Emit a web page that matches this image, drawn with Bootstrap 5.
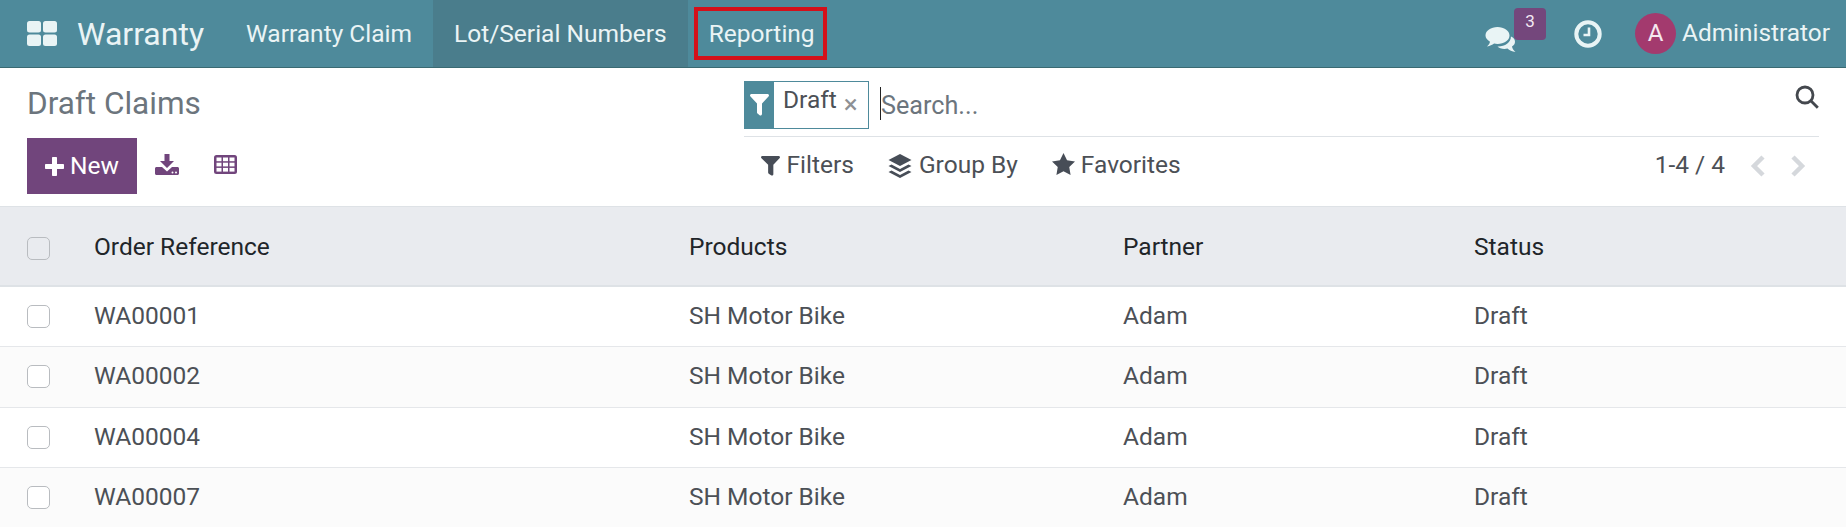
<!DOCTYPE html>
<html lang="en"><head><meta charset="utf-8"><title>Draft Claims</title>
<link href="https://cdn.jsdelivr.net/npm/bootstrap@5.3.0/dist/css/bootstrap.min.css" rel="stylesheet">
<style>
html,body{height:529px;overflow:hidden}
body{font-family:Roboto,"Liberation Sans",sans-serif;background:#fff;color:#4c5056;font-size:24.5px}
.topbar{height:68px;background:#4e8a9b;border-bottom:1px solid #3a6a72;color:#eaf4f5;padding-left:27px}
.apps-ico{width:30px;height:25px;margin-right:20px}
.brand-name{font-size:32px;width:148px}
.menu-it{height:67px;padding:0 21px;font-size:24.5px;color:#eaf4f5;line-height:67px}
.menu-it.on{background:#4a7d8c}
.hl-box{position:absolute;left:694px;top:7px;width:133px;height:53px;border:4px solid #d4101a;pointer-events:none}
.chat-wrap{position:relative;width:31px;height:26px;margin-right:58px}
.cnt{position:absolute;left:29px;top:-13px;width:32px;height:32px;border-radius:4px;background:#74477c;color:#f3e9f3;font-size:17px;line-height:26px;text-align:center}
.clock-ico{width:28px;height:28px;margin-right:33px}
.ava{width:41px;height:41px;border-radius:50%;background:#a33a6e;color:#f5e8ef;font-size:24px;line-height:41px;text-align:center;margin-right:6px}
.who{font-size:24.4px;margin-right:16px}
.cpanel{height:139px;padding:0 27px;border-bottom:1px solid #dee2e6}
.cp-left{width:717px}
.cp-title{font-size:31.5px;color:#6c757d;line-height:40px;margin-top:16px;height:54px}
.new-btn{width:110px;height:56px;background:#71457c;color:#fff;font-size:24.5px;border-radius:0;border:0;padding:0}
.new-btn:hover{background:#71457c;color:#fff}
.plus-ico{margin-right:6px}
.tool-ico{color:#71457c;margin-bottom:4px}
.tool-dl{margin-left:18px}
.tool-grid{margin-left:35px}
.cp-right{flex:1;min-width:0}
.srch{height:69px;padding-top:13px;border-bottom:1px solid #dee2e6}
.facet{width:125px;height:48px;border:1px solid #4e8a9b}
.facet-ico{width:29px;background:#4e8a9b}
.facet-txt{font-size:24.5px;color:#4c5056;line-height:36px;padding-left:9px}
.facet-x{color:#8d9094;font-size:26px;line-height:44px;margin-left:7px}
.srch-in{flex:1;border:0;outline:0;margin-left:11px;margin-top:6px;padding:3px 0 0;font:25.2px Roboto,sans-serif;height:33px;border-left:1px solid #222;color:#4c5056}
.srch-in::placeholder{color:#6c757d;opacity:1}
.filt-row{height:56px;font-size:24.5px;padding-left:17px;padding-right:13px;padding-top:1px}
.filt-it{margin-right:34.5px;gap:6.5px}
.star-ico{margin-top:-3px;margin-right:-1px}
.pg-n{margin-right:25px}
.pg-prev{margin-right:26px}
.tbl{--bs-table-bg:transparent;margin:0;table-layout:fixed;width:1846px;font-size:24.5px;color:#4c5056}
.tbl th{background:#e9ebef;height:79px;font-weight:400;color:#212529;vertical-align:middle;padding:2px 0 0;border-bottom:2px solid #dee2e6}
.tbl td{height:60px;vertical-align:middle;padding:0;border-bottom:1px solid #e5e7ea}
.tbl tbody tr:nth-child(2) td{height:61px}
.tbl tbody tr:nth-child(even) td{background:#fbfbfb}
.tbl tbody tr:last-child td{border-bottom:0}
.c1{width:94px}.c2{width:595px}.c3{width:434px}.c4{width:351px}
.cbx{display:block;width:23px;height:23px;margin-left:27px;border:1px solid #b9bcc0;border-radius:5px;background:#fff}
.tbl th .cbx{background:transparent;margin-top:2px}
</style></head><body>
<nav class="topbar d-flex align-items-center position-relative">
<svg class="apps-ico" viewBox="0 0 30 25" fill="#e9f4f5"><rect x="0" width="14" height="11.500" rx="2.500"/><rect x="16" width="14" height="11.500" rx="2.500"/><rect y="13.500" width="14" height="11.500" rx="2.500"/><rect x="16" y="13.500" width="14" height="11.500" rx="2.500"/></svg>
<span class="brand-name">Warranty</span>
<a class="menu-it text-decoration-none">Warranty Claim</a>
<a class="menu-it on text-decoration-none">Lot/Serial Numbers</a>
<a class="menu-it text-decoration-none">Reporting</a>
<div class="hl-box"></div>
<div class="ms-auto d-flex align-items-center">
<div class="chat-wrap">
<svg width="31" height="26" viewBox="0 0 31 26" fill="#e9f4f5"><path d="M12.500 0C19 0 24.500 3.600 24.500 8.500S19 17 12.500 17c-1.200 0-2.300-.1-3.400-.4C7.200 18 5 19.200 2 19.500c1.300-1.200 2.600-2.800 3-4.800C2 13 .5 10.900.5 8.500.5 3.600 6 0 12.500 0z"/><path d="M26 9.500c2.800 1.300 4 3.200 4 5.300 0 2-1.100 3.500-3 4.700.3 2 1.700 4 3.500 5.500-3.400-.3-6.200-1.600-8-3.400-1 .2-2 .3-3 .3-3 0-5.600-1-7-2.500 6.800.3 13.500-3.100 13.500-10.400z"/></svg>
<span class="cnt">3</span>
</div>
<svg class="clock-ico" viewBox="0 0 28 28" fill="none" stroke="#e9f4f5"><circle cx="14" cy="14" r="11.700" stroke-width="4"/><path d="M15 7.500V15H9.500" stroke-width="2.600"/></svg>
<span class="ava">A</span>
<span class="who">Administrator</span>
</div>
</nav>
<section class="cpanel d-flex">
<div class="cp-left">
<div class="cp-title">Draft Claims</div>
<div class="d-flex align-items-center">
<button class="btn new-btn d-flex align-items-center justify-content-center" type="button"><svg width="19" height="19" viewBox="0 0 19 19" fill="#fff" class="plus-ico"><path d="M7 1c0-.6.4-1 1-1h3c.6 0 1 .4 1 1v6h6c.6 0 1 .4 1 1v3c0 .6-.4 1-1 1h-6v6c0 .6-.4 1-1 1H8c-.6 0-1-.4-1-1v-6H1c-.6 0-1-.4-1-1V8c0-.6.4-1 1-1h6z"/></svg>New</button>
<svg class="tool-ico tool-dl" width="24" height="21" viewBox="0 0 24 21" fill="currentColor"><path d="M9.500 0h5v7h4.500l-7 7-7-7h4.500z"/><path d="M1.500 13h5.500l5 4.500 5-4.500h5.500c.8 0 1.500.7 1.500 1.500V19.500c0 .8-.7 1.500-1.500 1.500h-21C.7 21 0 20.300 0 19.500v-5C0 13.700.7 13 1.500 13z"/><circle cx="17.500" cy="18.500" r="1" fill="#fff"/><circle cx="21" cy="18.500" r="1" fill="#fff"/></svg>
<svg class="tool-ico tool-grid" width="23" height="19" viewBox="0 0 23 19"><rect width="23" height="19" rx="2.500" fill="currentColor"/><g fill="#fff"><rect x="2.500" y="2.500" width="5" height="3.700"/><rect x="9" y="2.500" width="5" height="3.700"/><rect x="15.500" y="2.500" width="5" height="3.700"/><rect x="2.500" y="7.700" width="5" height="3.700"/><rect x="9" y="7.700" width="5" height="3.700"/><rect x="15.500" y="7.700" width="5" height="3.700"/><rect x="2.500" y="12.900" width="5" height="3.700"/><rect x="9" y="12.900" width="5" height="3.700"/><rect x="15.500" y="12.900" width="5" height="3.700"/></g></svg>
</div>
</div>
<div class="cp-right">
<div class="srch d-flex">
<div class="facet d-flex">
<div class="facet-ico d-flex align-items-center justify-content-center"><svg width="19" height="22" viewBox="0 0 19 22" fill="#fff"><path d="M0 1.500C0 .7.700 0 1.500 0h16c.8 0 1.500.7 1.500 1.500 0 .4-.2.8-.5 1.100L12 9.500V20c0 1.200-1.400 2-2.400 1.200l-2-1.600c-.4-.3-.6-.7-.6-1.200v-9L.5 2.600C.2 2.300 0 1.900 0 1.500z"/></svg></div>
<span class="facet-txt">Draft</span><span class="facet-x">×</span>
</div>
<input class="srch-in align-self-start" type="text" placeholder="Search...">
<svg class="align-self-start mt-1" width="24" height="24" viewBox="0 0 24 24" fill="none" stroke="#44484e" stroke-width="2.800"><circle cx="10" cy="10" r="8"/><path d="M15.800 15.800l7 7"/></svg>
</div>
<div class="filt-row d-flex align-items-center">
<span class="filt-it d-flex align-items-center"><svg width="19" height="20" viewBox="0 0 20 22" fill="#474d57" preserveAspectRatio="none"><path d="M0 1.500C0 .7.700 0 1.500 0h17c.8 0 1.500.7 1.500 1.500 0 .4-.2.8-.5 1.100L13 9.500V20c0 1.200-1.400 2-2.400 1.200l-2.500-1.800c-.4-.3-.6-.7-.6-1.200V9.500L.5 2.600C.2 2.300 0 1.900 0 1.500z"/></svg>Filters</span>
<span class="filt-it d-flex align-items-center"><svg width="24" height="24" viewBox="0 0 24 24" fill="#474d57"><path d="M12 0l11.500 6L12 12 .5 6z"/><path d="M3.500 10.500L12 15l8.500-4.500 3 1.500L12 18 .5 12z"/><path d="M3.500 16.500L12 21l8.500-4.500 3 1.500L12 24 .5 18z"/></svg>Group By</span>
<span class="filt-it d-flex align-items-center"><svg class="star-ico" width="23" height="22" viewBox="0 0 24 23" fill="#474d57" preserveAspectRatio="none"><path d="M12 0l3.700 7.600 8.300 1.200-6 5.900 1.400 8.300-7.400-3.900-7.400 3.900L6 14.700 0 8.800l8.300-1.200z"/></svg>Favorites</span>
<span class="ms-auto pg-n">1-4 / 4</span>
<svg class="pg-prev" width="15" height="22" viewBox="0 0 15 22" fill="none" stroke="#d5d8dc" stroke-width="4.500"><path d="M13 2L4 11l9 9"/></svg>
<svg width="15" height="22" viewBox="0 0 15 22" fill="none" stroke="#d5d8dc" stroke-width="4.500"><path d="M2 2l9 9-9 9"/></svg>
</div>
</div>
</section>
<table class="table tbl">
<thead><tr><th class="c1"><span class="cbx"></span></th><th class="c2">Order Reference</th><th class="c3">Products</th><th class="c4">Partner</th><th>Status</th></tr></thead>
<tbody>
<tr><td><span class="cbx"></span></td><td>WA00001</td><td>SH Motor Bike</td><td>Adam</td><td>Draft</td></tr>
<tr><td><span class="cbx"></span></td><td>WA00002</td><td>SH Motor Bike</td><td>Adam</td><td>Draft</td></tr>
<tr><td><span class="cbx"></span></td><td>WA00004</td><td>SH Motor Bike</td><td>Adam</td><td>Draft</td></tr>
<tr><td><span class="cbx"></span></td><td>WA00007</td><td>SH Motor Bike</td><td>Adam</td><td>Draft</td></tr>
</tbody></table>
<script src="https://cdn.jsdelivr.net/npm/bootstrap@5.3.0/dist/js/bootstrap.bundle.min.js"></script>
</body></html>
